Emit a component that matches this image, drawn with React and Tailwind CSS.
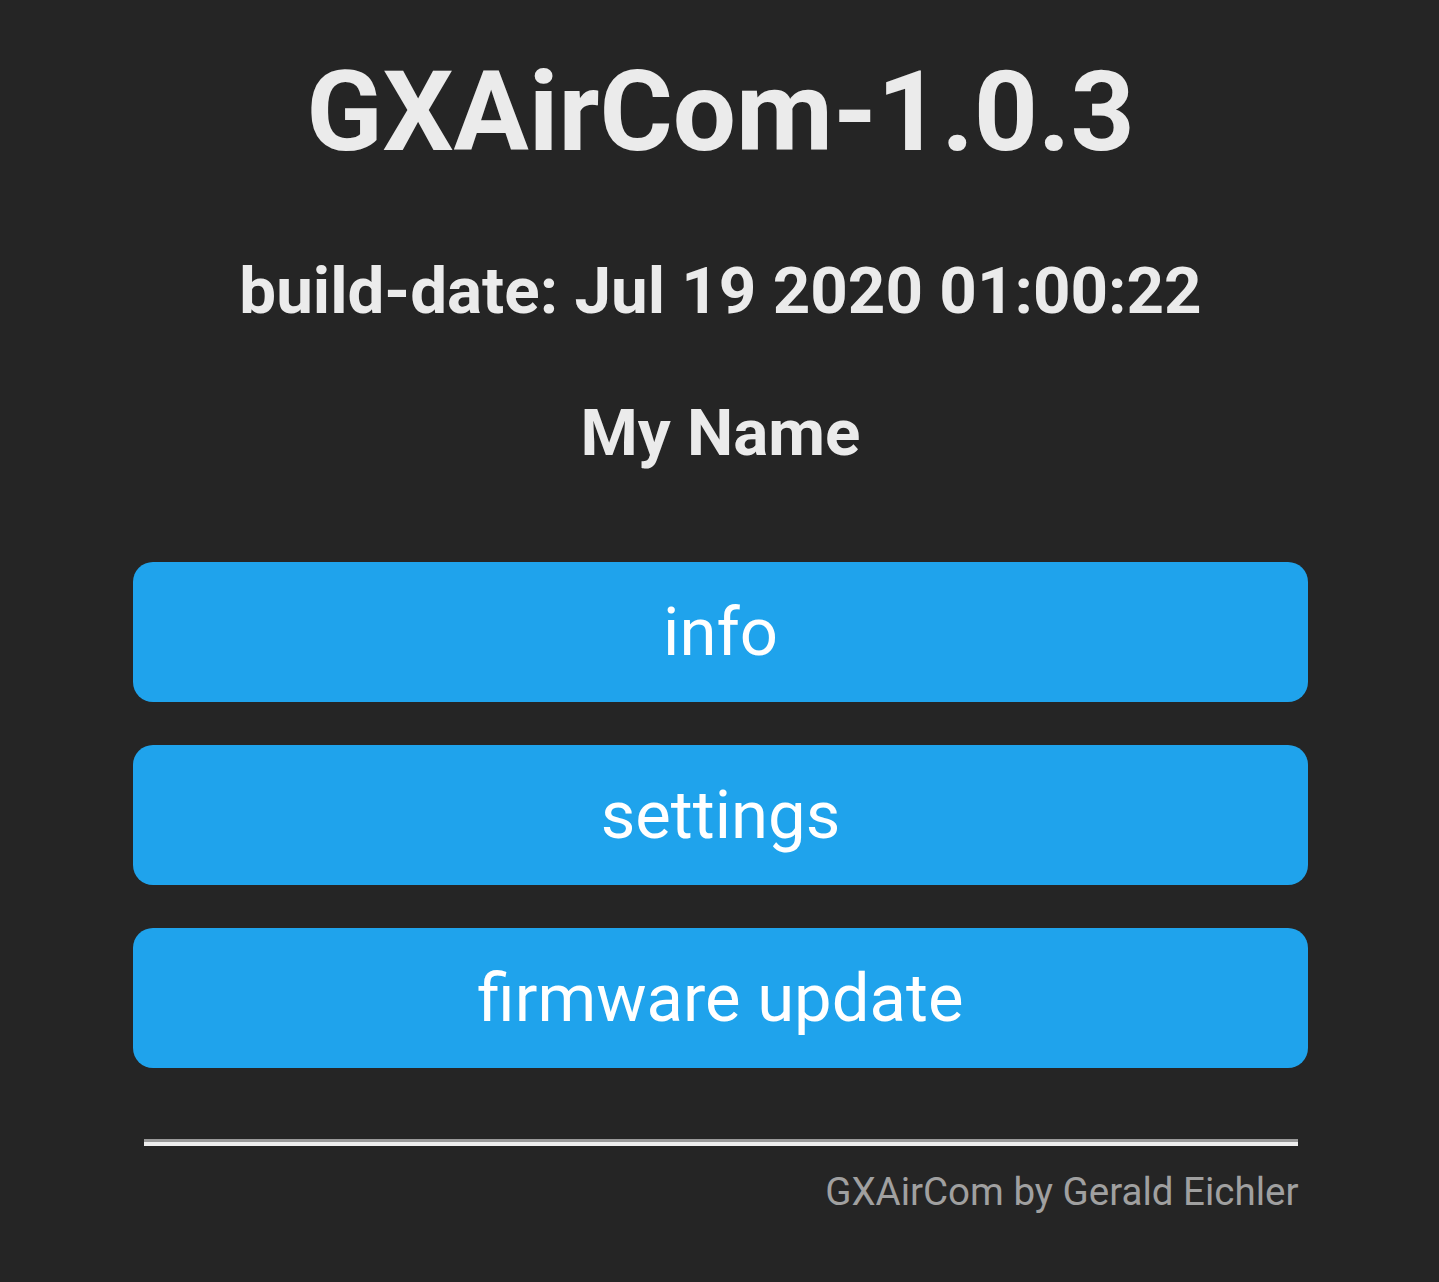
import React from "react";

const menu = ["info", "settings", "firmware update"];

const App = () => {
  return (
    <div
      className="min-h-[1282px] w-full bg-[#252525] text-[#ebebeb]"
      style={{ fontFamily: "Roboto, 'Noto Sans', sans-serif" }}
    >
      <div className="ml-[133px] flex w-[1175px] flex-col items-center pt-[46px]">
        <h1 className="text-[112px] font-bold leading-[131px]">GXAirCom-1.0.3</h1>
        <h3 className="mt-[75px] text-[65.5px] font-bold leading-[77px]">
          build-date: Jul 19 2020 01:00:22
        </h3>
        <h3 className="mt-[65px] text-[65.5px] font-bold leading-[77px]">My Name</h3>

        <div className="mt-[91px] flex w-full flex-col gap-[43px]">
          {menu.map((label) => (
            <button
              key={label}
              className="h-[140px] w-full rounded-[20px] bg-[#1fa3ec] text-[67px] leading-[134px] font-normal text-white"
            >
              {label}
            </button>
          ))}
        </div>

        <div className="mt-[71px] h-0 w-[1154px] border-t-[3px] border-b-[4px] border-t-[#9a9a9a] border-b-[#eeeeee]" />

        <div className="mt-[23px] w-[1154px] -mr-[2px] text-right text-[38.5px] leading-[46px] text-[#a0a0a0]">
          GXAirCom by Gerald Eichler
        </div>
      </div>
    </div>
  );
};

export default App;
